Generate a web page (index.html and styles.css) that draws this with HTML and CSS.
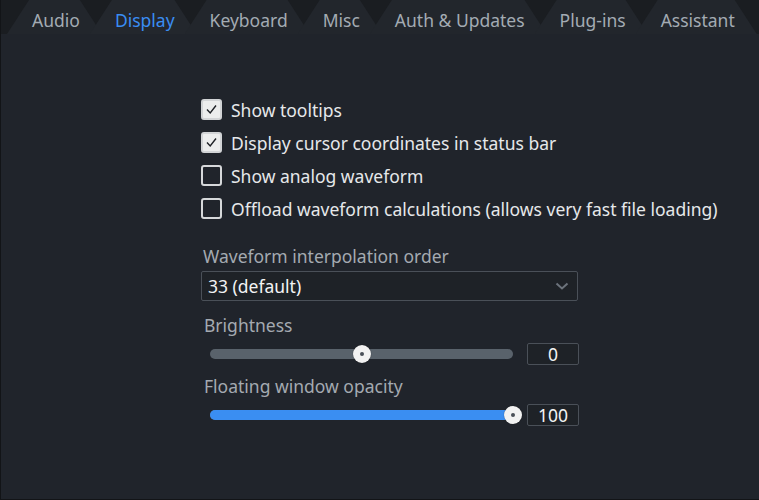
FILE: index.html
```html
<!DOCTYPE html>
<html>
<head>
<meta charset="utf-8">
<link rel="stylesheet" href="styles.css">
</head>
<body>
<div class="window">
  <nav class="tabbar">
    <span class="tab">Audio</span>
    <span class="tab active">Display</span>
    <span class="tab">Keyboard</span>
    <span class="tab">Misc</span>
    <span class="tab">Auth &amp; Updates</span>
    <span class="tab">Plug-ins</span>
    <span class="tab">Assistant</span>
  </nav>
  <main class="content">
    <div class="checks">
      <label class="check"><span class="box on"><svg viewBox="0 0 21 21" width="21" height="21"><path d="M6 10.5 L9.2 14 L15 6.5" fill="none" stroke="#1e2126" stroke-width="1.4"/></svg></span>Show tooltips</label>
      <label class="check"><span class="box on"><svg viewBox="0 0 21 21" width="21" height="21"><path d="M6 10.5 L9.2 14 L15 6.5" fill="none" stroke="#1e2126" stroke-width="1.4"/></svg></span>Display cursor coordinates in status bar</label>
      <label class="check"><span class="box"></span>Show analog waveform</label>
      <label class="check"><span class="box"></span>Offload waveform calculations (allows very fast file loading)</label>
    </div>
    <div class="field">
      <div class="label">Waveform interpolation order</div>
      <div class="select"><span>33 (default)</span><svg class="chev" viewBox="0 0 14 8" width="14" height="8"><path d="M1.5 1.5 L7 6.5 L12.5 1.5" fill="none" stroke="#6c737c" stroke-width="2"/></svg></div>
    </div>
    <div class="field slider-field">
      <div class="label">Brightness</div>
      <div class="slider-row">
        <div class="track"><div class="fill" style="width:50%"></div><div class="thumb" style="left:50%"></div></div>
        <div class="num">0</div>
      </div>
    </div>
    <div class="field slider-field second">
      <div class="label">Floating window opacity</div>
      <div class="slider-row">
        <div class="track blue"><div class="fill" style="width:100%"></div><div class="thumb" style="left:100%"></div></div>
        <div class="num">100</div>
      </div>
    </div>
  </main>
</div>
</body>
</html>
```
FILE: styles.css
```css
html, body { margin: 0; padding: 0; }
body {
  background: #20242b;
  font-family: "Noto Sans", "Open Sans", sans-serif;
  color: #e4e6e8;
}
.window {
  width: 759px;
  height: 500px;
  box-sizing: border-box;
  border-left: 1px solid #121417;
  border-bottom: 1px solid #121417;
  background: #20242b;
  overflow: hidden;
}
.tabbar {
  height: 34px;
  background: #1a1d21;
  display: flex;
  align-items: stretch;
  padding-left: 6px;
}
.tab {
  display: flex;
  align-items: center;
  padding: 5px 22px 0 25px;
  margin-right: -12px;
  font-size: 17.5px;
  color: #a3abb3;
  background: #22262c;
  clip-path: polygon(0 100%, 22px 0, calc(100% - 22px) 0, 100% 100%);
  white-space: nowrap;
}
.tab.active { color: #3a8df2; background: #23272d; }
.content {
  padding: 64px 0 0 200px;
}
.checks { display: flex; flex-direction: column; gap: 10px; }
.check {
  display: flex;
  align-items: center;
  gap: 9px;
  height: 23px;
  font-size: 17.5px;
  color: #e6e8ea;
}
.box {
  width: 21px;
  height: 21px;
  box-sizing: border-box;
  border: 2px solid #d6d8da;
  border-radius: 3px;
  flex: none;
  display: flex;
}
.box.on { background: #eceded; border-color: #d2d4d6; }
.box svg { margin: -2px; }
.field { margin-top: 25px; }
.label { font-size: 17.5px; color: #a4aab1; padding-left: 2px; height: 22px; line-height: 22px; }
.select {
  margin-top: 4px;
  width: 377px;
  height: 30px;
  box-sizing: border-box;
  border: 1px solid #4a5058;
  border-radius: 2px;
  background: #1e2227;
  display: flex;
  align-items: center;
  justify-content: space-between;
  padding: 0 8px 0 6px;
  font-size: 17.5px;
  color: #f2f3f4;
}
.slider-field { margin-top: 13px; }
.slider-field .label { padding-left: 3px; }
.slider-field.second { margin-top: 10px; }
.slider-row {
  display: flex;
  align-items: center;
  margin-top: 7px;
  padding-left: 9px;
  gap: 14px;
  height: 22px;
}
.track {
  position: relative;
  width: 303px;
  height: 10px;
  border-radius: 5px;
  background: #59626b;
}
.track .fill { height: 100%; border-radius: 5px; background: transparent; }
.track.blue .fill { background: #3a8ef2; }
.thumb {
  position: absolute;
  top: 50%;
  width: 18px;
  height: 18px;
  margin: -9px 0 0 -9px;
  border-radius: 50%;
  background: #f2f2f2;
  box-shadow: 0 0 1px rgba(0,0,0,.6);
}
.thumb::after {
  content: "";
  position: absolute;
  left: 7px; top: 7px;
  width: 4px; height: 4px;
  border-radius: 50%;
  background: #4a5058;
}
.num {
  width: 52px;
  height: 22px;
  box-sizing: border-box;
  border: 1px solid #4a5058;
  border-radius: 2px;
  background: #1e2227;
  font-size: 17.5px;
  line-height: 20px;
  text-align: center;
  color: #f2f3f4;
}
```
